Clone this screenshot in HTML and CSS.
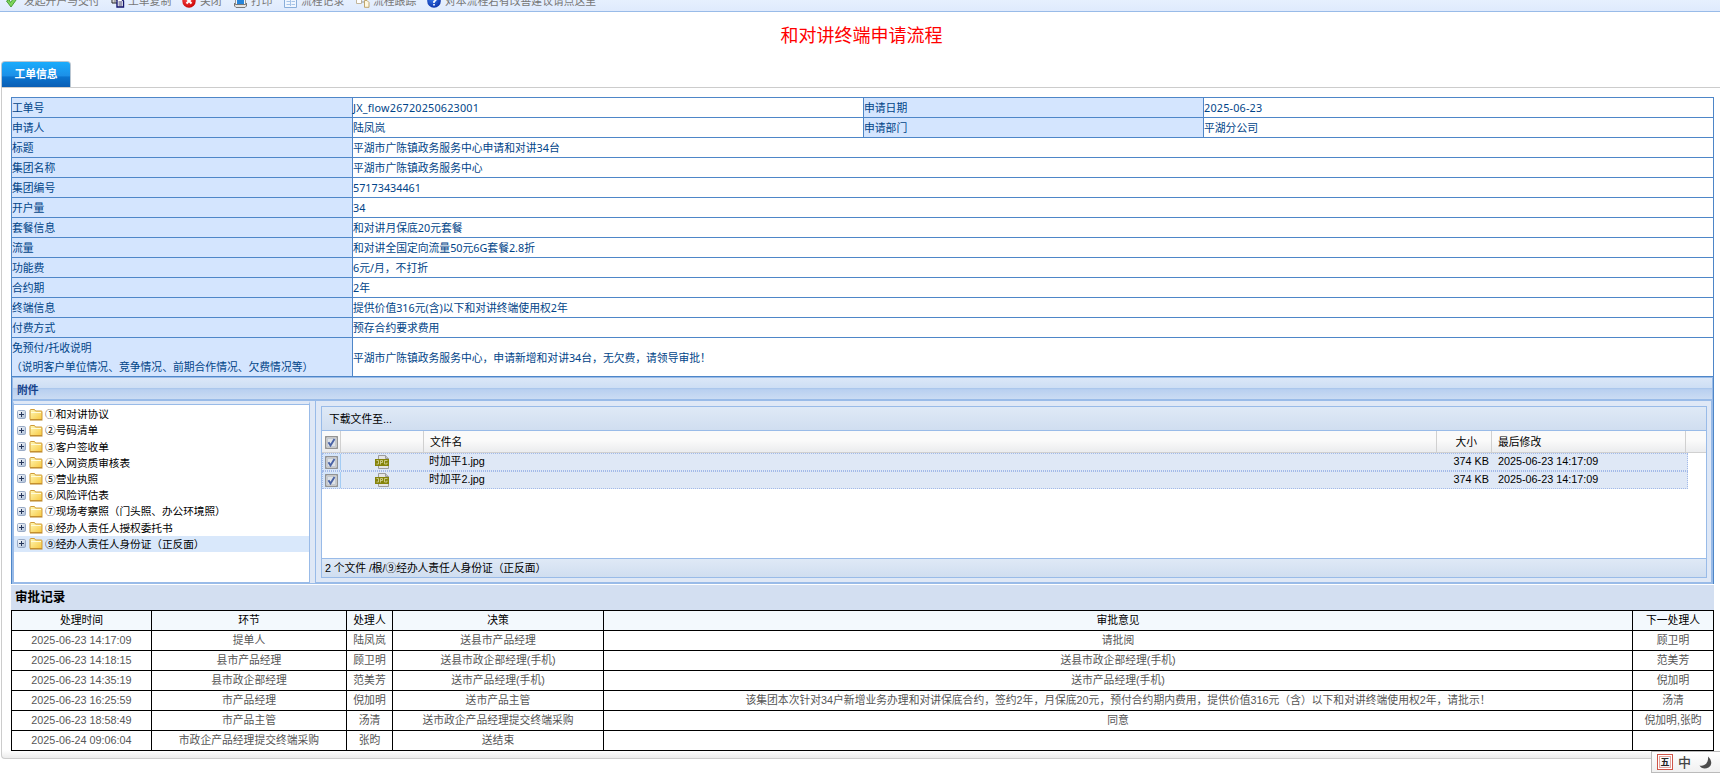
FILE: index.html
```html
<!DOCTYPE html>
<html lang="zh-CN">
<head>
<meta charset="utf-8">
<title>和对讲终端申请流程</title>
<link rel="stylesheet" href="styles.css">
</head>
<body>
<svg class="defs" width="0" height="0">
  <defs>
    <linearGradient id="gfold" x1="0" y1="0" x2="1" y2="1"><stop offset="0" stop-color="#fff9b8"/><stop offset="1" stop-color="#f7c840"/></linearGradient>
    <radialGradient id="gred" cx=".4" cy=".35" r=".7"><stop offset="0" stop-color="#f55"/><stop offset="1" stop-color="#c80000"/></radialGradient>
    <radialGradient id="gblue" cx=".4" cy=".35" r=".7"><stop offset="0" stop-color="#3b7bea"/><stop offset="1" stop-color="#0a2fa8"/></radialGradient>
    <linearGradient id="gbtn" x1="0" y1="0" x2="1" y2="1"><stop offset="0" stop-color="#fff"/><stop offset="1" stop-color="#a9bcd6"/></linearGradient>
    <symbol id="plus" viewBox="0 0 9 9"><rect x=".5" y=".5" width="8" height="8" rx="1.2" fill="url(#gbtn)" stroke="#9aabc6"/><path d="M2 4.5h5M4.500 2v5" stroke="#26375c"/></symbol>
    <symbol id="folder" viewBox="0 0 14 13"><path d="M1 11.500V2.500Q1 1.500 2 1.500H5.500L6.500 3H12.500Q13 3 13 4V11.500Z" fill="url(#gfold)" stroke="#cf9b38"/><path d="M2 4.500H12" stroke="#fffbd8"/><path d="M1 12h12.500" stroke="#b88324" stroke-width="1"/></symbol>
    <symbol id="check" viewBox="0 0 13 13"><rect x=".75" y=".75" width="11.500" height="11.500" fill="#f4f4f4" stroke="#898989" stroke-width="1.300"/><rect x="2.500" y="2.500" width="8" height="8" fill="#dfe3e8" stroke="#c4c9d0"/><path d="M3.500 6.200L5.500 9.500L9.500 3" fill="none" stroke="#4a63a6" stroke-width="1.900"/></symbol>
    <symbol id="jpg" viewBox="0 0 14 14"><path d="M3.500 13.500V.5H10.500L13.500 3.500V13.500Z" fill="#e4e4e4" stroke="#9c9c9c"/><path d="M10.500.5V3.500H13.500" fill="#c4c4c4" stroke="#9c9c9c"/><path d="M0 4H14V11H0Z" fill="#85830a"/><path d="M1.500 5.500H3.500V9H1.500M5.500 9.500V5.500H7.500V7.500H5.500M12.500 5.500H9.500V9H12V7.500" fill="none" stroke="#d9d8a0" stroke-width=".8"/></symbol>
  </defs>
</svg>

<div class="toolbar"><div class="tools">
  <span class="tool t1"><svg width="13" height="14" viewBox="0 0 13 14"><path d="M1.500 7L4 5.500L5.500 8.500L10.500 2L12.500 4L6 13Z" fill="#7ed65a" stroke="#4a9e3a"/></svg>发起开户与交付</span>
  <span class="tool t2"><svg width="14" height="14" viewBox="0 0 14 14"><path d="M1 2H7V9H1Z" fill="#fff" stroke="#222"/><path d="M2.500 4H6M2.500 6H6M2.500 8H5" stroke="#555"/><path d="M6 5H10.500L12.500 7V13H6Z" fill="#fff" stroke="#15156e" stroke-width="1.400"/><path d="M7.500 8H11M7.500 10H11M7.500 12H11" stroke="#336"/></svg>工单复制</span>
  <span class="tool t3"><svg width="14" height="14" viewBox="0 0 14 14"><circle cx="7" cy="7" r="6.700" fill="url(#gred)"/><path d="M4.500 4.500L9.500 9.500M9.500 4.500L4.500 9.500" stroke="#fff" stroke-width="2"/></svg>关闭</span>
  <span class="tool t4"><svg width="15" height="14" viewBox="0 0 15 14"><path d="M2.500 1H12.500V11H2.500Z" fill="#f6f6f6" stroke="#999"/><path d="M4 4.500H11V10H4Z" fill="#2685db"/><path d="M1.500 9V12L3 13.500H12L13.500 12V9L12.500 10.500H2.500Z" fill="#e4e4e4" stroke="#777"/></svg>打印</span>
  <span class="tool t5"><svg width="13" height="14" viewBox="0 0 13 14"><path d="M.5 .5H12.500V13.500H.5Z" fill="#eff6ff" stroke="#89aeda"/><path d="M1 3H12" stroke="#7fa9de" stroke-width="3"/><path d="M2.500 7.500H6M7.500 7.500H11M2.500 10.500H6M7.500 10.500H11M6.500 5V12" stroke="#a7c4e8"/></svg>流程记录</span>
  <span class="tool t6"><svg width="14" height="14" viewBox="0 0 14 14"><path d="M.5 4.500H5.500V9.500H.5Z" fill="#fff" stroke="#c3b79c"/><path d="M5.500 8H8.500" stroke="#999"/><path d="M8.500 6.500H11L13 8.500V13.300H8.500Z" fill="#fff8df" stroke="#bfa66e"/></svg>流程跟踪</span>
  <span class="tool t7"><svg width="14" height="14" viewBox="0 0 14 14"><circle cx="7" cy="7" r="6.800" fill="url(#gblue)"/><path d="M5 5.500Q5 3.500 7 3.500T9 5.500Q9 6.500 7 7.500V9" fill="none" stroke="#fff" stroke-width="1.600"/><path d="M7 10V11.500" stroke="#fff" stroke-width="1.700"/></svg>对本流程若有改善建议请点这里</span>
</div></div>

<h1 class="title">和对讲终端申请流程</h1>
<div class="tabs"><span class="tab">工单信息</span></div>

<main class="sheet">
  <table class="info">
    <colgroup><col class="i1"><col class="i2"><col class="i3"><col></colgroup>
    <tr><th>工单号</th><td class="wide">JX_flow26720250623001</td><th>申请日期</th><td class="wide">2025-06-23</td></tr>
    <tr><th>申请人</th><td>陆凤岚</td><th>申请部门</th><td>平湖分公司</td></tr>
    <tr><th>标题</th><td colspan="3">平湖市广陈镇政务服务中心申请和对讲34台</td></tr>
    <tr><th>集团名称</th><td colspan="3">平湖市广陈镇政务服务中心</td></tr>
    <tr><th>集团编号</th><td colspan="3">57173434461</td></tr>
    <tr><th>开户量</th><td colspan="3">34</td></tr>
    <tr><th>套餐信息</th><td colspan="3">和对讲月保底20元套餐</td></tr>
    <tr><th>流量</th><td colspan="3">和对讲全国定向流量50元6G套餐2.8折</td></tr>
    <tr><th>功能费</th><td colspan="3">6元/月，不打折</td></tr>
    <tr><th>合约期</th><td colspan="3">2年</td></tr>
    <tr><th>终端信息</th><td colspan="3">提供价值316元(含)以下和对讲终端使用权2年</td></tr>
    <tr><th>付费方式</th><td colspan="3">预存合约要求费用</td></tr>
    <tr class="tall"><th>免预付/托收说明<br><span class="note">（说明客户单位情况、竞争情况、前期合作情况、欠费情况等）</span></th><td colspan="3">平湖市广陈镇政务服务中心，申请新增和对讲34台，无欠费，请领导审批！</td></tr>
  </table>

  <section class="attach">
    <div class="attach-head">附件</div>
    <div class="attach-body">
      <ul class="tree">
        <li><svg class="plus"><use href="#plus"/></svg><svg class="folder"><use href="#folder"/></svg>①和对讲协议</li>
        <li><svg class="plus"><use href="#plus"/></svg><svg class="folder"><use href="#folder"/></svg>②号码清单</li>
        <li><svg class="plus"><use href="#plus"/></svg><svg class="folder"><use href="#folder"/></svg>③客户签收单</li>
        <li><svg class="plus"><use href="#plus"/></svg><svg class="folder"><use href="#folder"/></svg>④入网资质审核表</li>
        <li><svg class="plus"><use href="#plus"/></svg><svg class="folder"><use href="#folder"/></svg>⑤营业执照</li>
        <li><svg class="plus"><use href="#plus"/></svg><svg class="folder"><use href="#folder"/></svg>⑥风险评估表</li>
        <li><svg class="plus"><use href="#plus"/></svg><svg class="folder"><use href="#folder"/></svg>⑦现场考察照（门头照、办公环境照）</li>
        <li><svg class="plus"><use href="#plus"/></svg><svg class="folder"><use href="#folder"/></svg>⑧经办人责任人授权委托书</li>
        <li class="selected"><svg class="plus"><use href="#plus"/></svg><svg class="folder"><use href="#folder"/></svg>⑨经办人责任人身份证（正反面）</li>
      </ul>
      <div class="files-wrap">
        <div class="files">
          <div class="files-bar">下载文件至...</div>
          <div class="frow fhead"><span class="c0"><svg class="cb"><use href="#check"/></svg></span><span class="c1"></span><span class="c2">文件名</span><span class="c3">大小</span><span class="c4">最后修改</span></div>
          <div class="frow fitem"><span class="c0"><svg class="cb"><use href="#check"/></svg></span><span class="c1"><svg class="jpg"><use href="#jpg"/></svg></span><span class="c2">时加平1.jpg</span><span class="c3">374 KB</span><span class="c4">2025-06-23 14:17:09</span></div>
          <div class="frow fitem"><span class="c0"><svg class="cb"><use href="#check"/></svg></span><span class="c1"><svg class="jpg"><use href="#jpg"/></svg></span><span class="c2">时加平2.jpg</span><span class="c3">374 KB</span><span class="c4">2025-06-23 14:17:09</span></div>
          <div class="files-status">2 个文件 /根/⑨经办人责任人身份证（正反面）</div>
        </div>
      </div>
    </div>
  </section>

  <h2 class="log-title">审批记录</h2>
  <table class="log">
    <colgroup><col class="l1"><col class="l2"><col class="l3"><col class="l4"><col class="l5"><col></colgroup>
    <tr><th>处理时间</th><th>环节</th><th>处理人</th><th>决策</th><th>审批意见</th><th>下一处理人</th></tr>
    <tr><td>2025-06-23 14:17:09</td><td>提单人</td><td>陆凤岚</td><td>送县市产品经理</td><td>请批阅</td><td>顾卫明</td></tr>
    <tr><td>2025-06-23 14:18:15</td><td>县市产品经理</td><td>顾卫明</td><td>送县市政企部经理(手机)</td><td>送县市政企部经理(手机)</td><td>范美芳</td></tr>
    <tr><td>2025-06-23 14:35:19</td><td>县市政企部经理</td><td>范美芳</td><td>送市产品经理(手机)</td><td>送市产品经理(手机)</td><td>倪加明</td></tr>
    <tr><td>2025-06-23 16:25:59</td><td>市产品经理</td><td>倪加明</td><td>送市产品主管</td><td>该集团本次针对34户新增业务办理和对讲保底合约，签约2年，月保底20元，预付合约期内费用，提供价值316元（含）以下和对讲终端使用权2年，请批示！</td><td>汤清</td></tr>
    <tr><td>2025-06-23 18:58:49</td><td>市产品主管</td><td>汤清</td><td>送市政企产品经理提交终端采购</td><td>同意</td><td>倪加明,张昀</td></tr>
    <tr><td>2025-06-24 09:06:04</td><td>市政企产品经理提交终端采购</td><td>张昀</td><td>送结束</td><td></td><td></td></tr>
  </table>
</main>

<div class="ime">
  <span class="ime-logo">五</span><span class="ime-lang">中</span>
  <svg width="13" height="13" viewBox="0 0 13 13"><path d="M9 .5C13 4 13.500 9 9.500 11.500C6 13.500 2 12.500 .5 9.500C4 10.800 10 8 9 .5Z" fill="#4d4d4d"/></svg>
</div>
</body>
</html>
```
FILE: styles.css
```css
* { box-sizing: border-box; }
body {
  margin: 0;
  height: 782px;
  overflow: hidden;
  background: #fff;
  font: 10.8px/16px "Noto Sans", "Noto Sans CJK SC", sans-serif;
  color: #000;
}
.defs { position: absolute; }
svg { display: block; flex: none; }

.toolbar {
  height: 12px;
  overflow: hidden;
  background: linear-gradient(#e6f0fe, #dfeafd);
  border-bottom: 1px solid #99bbe8;
}
.tools { display: flex; height: 16px; margin-top: -7px; color: #777; }
.tool { display: flex; flex: none; white-space: nowrap; line-height: 16px; }
.tool svg { margin-top: 1px; margin-right: 4px; }
.t1 { width: 106px; margin-left: 5px; }
.t1 svg { margin-right: 6px; }
.t2 { width: 71px; }
.t2 svg { margin-right: 3px; }
.t3 { width: 51px; }
.t4 { width: 51px; }
.t4 svg { margin-right: 3px; }
.t5 { width: 72px; }
.t5 svg { margin-right: 4px; }
.t6 { width: 71px; }
.t6 svg { margin-right: 3px; }

.title {
  margin: 0;
  padding-left: 3px;
  height: 49px;
  font-size: 18px;
  font-weight: 400;
  line-height: 46px;
  text-align: center;
  color: #f00;
}
.tabs { height: 26px; padding-left: 1px; }
.tab {
  display: block;
  width: 70px;
  height: 26px;
  border: 1px solid #b9c6d2;
  border-bottom: 0;
  border-radius: 4px 4px 0 0;
  background: linear-gradient(#1aacfc 0%, #1c90e8 55%, #0a74cf 60%, #0a5eb4 100%);
  color: #fff;
  font-weight: 700;
  line-height: 23px;
  text-align: center;
}

.sheet {
  height: 672px;
  margin-left: 1px;
  padding: 9px 7px 0 9px;
  border: 1px solid #ccc;
  border-right: 0;
  border-radius: 0 0 0 4px;
  background: linear-gradient(#fff calc(100% - 8px), #ececec);
}
table { border-collapse: collapse; table-layout: fixed; }
td, th { padding: 0; font-weight: 400; white-space: nowrap; }

.info { width: 1703px; color: #004488; }
.i1 { width: 341px; }
.i2 { width: 511px; }
.i3 { width: 340px; }
.info tr { height: 20px; }
.info tr.tall { height: 39px; }
.info td, .info th { border: 1px solid #4e86c8; padding-bottom: 1px; text-align: left; background: #fff; line-height: 17px; }
.info th { background: #d4e5fe; }
.info .tall th { line-height: 19px; padding-bottom: 0; }
.info .tall td { padding-bottom: 0; }
.info .wide { letter-spacing: .2px; }
.note { margin-left: -1px; }

.attach {
  width: 1703px;
  height: 207px;
  border: 1px solid #4e86c8;
  border-top: 0;
  border-bottom: 0;
  background: #99bbe8;
  padding: 0 1px 1px;
}
.attach-head {
  height: 24px;
  padding-left: 4px;
  border-top: 1px solid #99bbe8;
  border-bottom: 2px solid #99bbe8;
  background: linear-gradient(#dbe7f7 0%, #cddef4 48%, #abc7ec 50%, #b9d0f0 56%, #cbdcf3 100%);
  color: #15428b;
  font-weight: 700;
  line-height: 24px;
}
.attach-body { display: flex; gap: 5px; height: 182px; background: #dfe8f6; }
.tree {
  flex: none;
  width: 297px;
  margin: 0;
  padding: 2px 0 0;
  border: 1px solid #99bbe8;
  border-top: 3px solid #dfe8f6;
  background: #fff;
  list-style: none;
  box-shadow: inset 0 1px #99bbe8;
  font-family: "Liberation Sans", "Noto Sans CJK SC", sans-serif;
  font-size: 10.7px;
}
.tree li { display: flex; align-items: center; height: 16.22px; padding-left: 3px; white-space: nowrap; letter-spacing: -.06px; }
.tree li.selected { background: #d9e8fb; }
.plus { width: 9px; height: 9px; margin-right: 3px; }
.folder { width: 14px; height: 13px; margin-right: 2px; }
.files-wrap { flex: 1; padding: 5px 4px 4px 5px; border: 1px solid #99bbe8; border-width: 0 1px 1px; }
.files {
  display: flex;
  flex-direction: column;
  height: 172px;
  border: 1px solid #99bbe8;
  background: #fff;
  font-family: "Liberation Sans", "Noto Sans CJK SC", sans-serif;
}
.files-bar {
  height: 24px;
  padding-left: 7px;
  border-bottom: 1px solid #99bbe8;
  background: linear-gradient(#dfe9f6, #d0def0);
  line-height: 24px;
}
.frow { display: flex; align-items: center; flex: none; }
.frow span { flex: none; height: 100%; display: flex; align-items: center; }
.c0 { width: 19px; padding-left: 3px; }
.c1 { width: 83px; justify-content: center; }
.c2 { width: 1013px; padding-left: 6px; }
.c3 { width: 55px; padding-right: 3px; justify-content: flex-end; }
.c4 { width: 194px; padding-left: 6px; }
.fhead { height: 22px; border-bottom: 1px solid #d0d0d0; background: linear-gradient(#fafafa 0 45%, #ebecee); }
.fhead span { border-right: 1px solid #d0d0d0; }
.fhead .c0 { padding-top: 2px; }
.fhead .c3 { padding-right: 14px; }
.cb { width: 13px; height: 13px; }
.jpg { width: 14px; height: 14px; margin-right: 1px; }
.fitem { width: 1366px; height: 18px; border: 1px dotted #a3bae9; background: #dfe8f6; }
.fitem .c0 { width: 18px; padding-left: 2px; border-right: 1px solid #a3ccf4; background: #d5e5fa; }
.fitem .c2 { padding-left: 5px; }
.fitem .c2, .fitem .c3, .fitem .c4 { padding-bottom: 2px; }
.files-status {
  height: 19px;
  margin-top: auto;
  padding-left: 3px;
  border-top: 1px solid #99bbe8;
  background: linear-gradient(#dfe9f6, #d0def0);
  line-height: 18px;
  letter-spacing: -.08px;
}

.log-title {
  width: 1703px;
  height: 26px;
  margin: 0;
  padding-left: 4px;
  border-top: 1px solid #fff;
  background: #d3dff1;
  font-size: 12.6px;
  line-height: 23px;
}
.log { width: 1703px; font-family: "Liberation Sans", "Noto Sans CJK SC", sans-serif; }
.l1 { width: 140px; }
.l2 { width: 195px; }
.l3 { width: 46px; }
.l4 { width: 211px; }
.l5 { width: 1029px; }
.log tr { height: 20px; }
.log td, .log th { border: 1px solid #000; padding-bottom: 2px; text-align: center; line-height: 16px; color: #555; }
.log th { background: #f3f9fd; color: #000; }

.ime {
  position: absolute;
  left: 1651px;
  top: 751px;
  width: 76px;
  height: 22px;
  display: flex;
  align-items: center;
  padding-left: 5px;
  border: 1px solid #bbb;
  background: linear-gradient(#fff, #f0f0f0);
  color: #444;
}
.ime-logo {
  width: 16px;
  height: 16px;
  border: 1px solid #cf5548;
  box-shadow: inset 0 0 0 1px #fff, inset 0 0 0 2px #e4a49c;
  font-size: 9px;
  font-weight: 700;
  line-height: 14px;
  text-align: center;
  color: #222;
}
.ime-lang { width: 14px; margin: 0 7px 0 5px; font-size: 13px; font-weight: 500; }
```
